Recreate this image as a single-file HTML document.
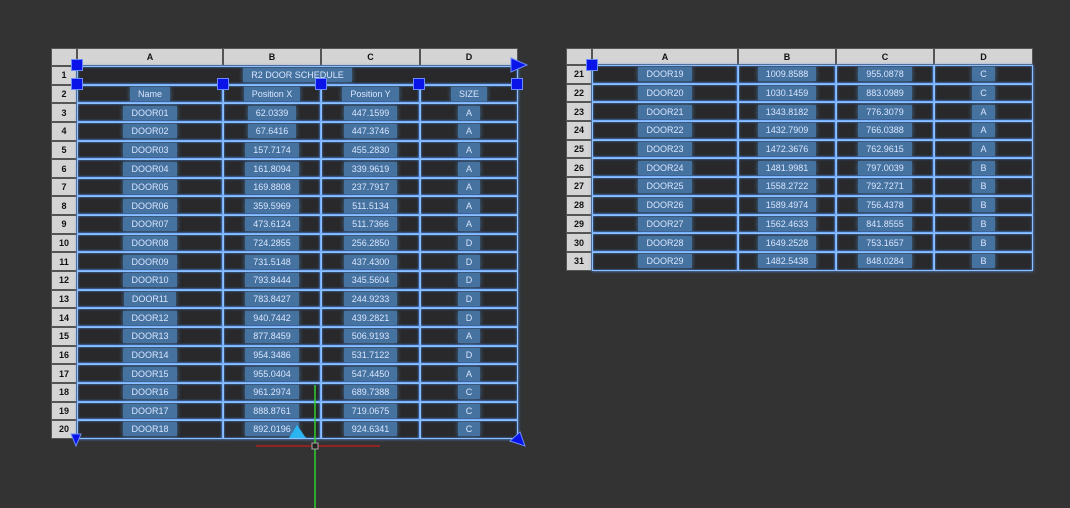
<!DOCTYPE html>
<html><head><meta charset="utf-8"><style>
body{margin:0;width:1070px;height:508px;background:#333333;position:relative;overflow:hidden;font-family:"Liberation Sans",sans-serif}
.g{position:absolute;display:grid;background:#2c2c2c}
.g>div{display:flex;align-items:center;justify-content:center;font-size:9px;box-sizing:border-box;overflow:hidden;white-space:nowrap}
.h{background:#d4d4d4;color:#111;font-weight:bold;border:1px solid #555;font-size:9px!important}
.c{background:#29292b;border:1px solid #8cc0ff;box-shadow:0 0 3px #5a9aff, inset 0 0 2px #4a86e0;color:#d8e6ff}
.c span{background:#46729f;padding:2px 8px;box-shadow:0 0 5px #46729f}
.L{left:51px;top:48px;width:467px;grid-template-columns:26px 146px 98px 99px 98px;grid-template-rows:18px repeat(20,18.65px)}
.R{left:566px;top:48px;width:467px;grid-template-columns:26px 146px 98px 98px 99px;grid-template-rows:17px repeat(11,18.7px)}
.sq{position:absolute;width:10px;height:10px;background:#0a14e8;border:1px solid #6a8cff}
</style></head><body>
<div class="g L">
<div class="h"></div><div class="h">A</div><div class="h">B</div><div class="h">C</div><div class="h">D</div>
<div class="h">1</div><div class="c" style="grid-column:2/6"><span>R2 DOOR SCHEDULE</span></div>
<div class="h">2</div><div class="c"><span>Name</span></div><div class="c"><span>Position X</span></div><div class="c"><span>Position Y</span></div><div class="c"><span>SIZE</span></div>
<div class="h">3</div><div class="c"><span>DOOR01</span></div><div class="c"><span>62.0339</span></div><div class="c"><span>447.1599</span></div><div class="c"><span>A</span></div>
<div class="h">4</div><div class="c"><span>DOOR02</span></div><div class="c"><span>67.6416</span></div><div class="c"><span>447.3746</span></div><div class="c"><span>A</span></div>
<div class="h">5</div><div class="c"><span>DOOR03</span></div><div class="c"><span>157.7174</span></div><div class="c"><span>455.2830</span></div><div class="c"><span>A</span></div>
<div class="h">6</div><div class="c"><span>DOOR04</span></div><div class="c"><span>161.8094</span></div><div class="c"><span>339.9619</span></div><div class="c"><span>A</span></div>
<div class="h">7</div><div class="c"><span>DOOR05</span></div><div class="c"><span>169.8808</span></div><div class="c"><span>237.7917</span></div><div class="c"><span>A</span></div>
<div class="h">8</div><div class="c"><span>DOOR06</span></div><div class="c"><span>359.5969</span></div><div class="c"><span>511.5134</span></div><div class="c"><span>A</span></div>
<div class="h">9</div><div class="c"><span>DOOR07</span></div><div class="c"><span>473.6124</span></div><div class="c"><span>511.7366</span></div><div class="c"><span>A</span></div>
<div class="h">10</div><div class="c"><span>DOOR08</span></div><div class="c"><span>724.2855</span></div><div class="c"><span>256.2850</span></div><div class="c"><span>D</span></div>
<div class="h">11</div><div class="c"><span>DOOR09</span></div><div class="c"><span>731.5148</span></div><div class="c"><span>437.4300</span></div><div class="c"><span>D</span></div>
<div class="h">12</div><div class="c"><span>DOOR10</span></div><div class="c"><span>793.8444</span></div><div class="c"><span>345.5604</span></div><div class="c"><span>D</span></div>
<div class="h">13</div><div class="c"><span>DOOR11</span></div><div class="c"><span>783.8427</span></div><div class="c"><span>244.9233</span></div><div class="c"><span>D</span></div>
<div class="h">14</div><div class="c"><span>DOOR12</span></div><div class="c"><span>940.7442</span></div><div class="c"><span>439.2821</span></div><div class="c"><span>D</span></div>
<div class="h">15</div><div class="c"><span>DOOR13</span></div><div class="c"><span>877.8459</span></div><div class="c"><span>506.9193</span></div><div class="c"><span>A</span></div>
<div class="h">16</div><div class="c"><span>DOOR14</span></div><div class="c"><span>954.3486</span></div><div class="c"><span>531.7122</span></div><div class="c"><span>D</span></div>
<div class="h">17</div><div class="c"><span>DOOR15</span></div><div class="c"><span>955.0404</span></div><div class="c"><span>547.4450</span></div><div class="c"><span>A</span></div>
<div class="h">18</div><div class="c"><span>DOOR16</span></div><div class="c"><span>961.2974</span></div><div class="c"><span>689.7388</span></div><div class="c"><span>C</span></div>
<div class="h">19</div><div class="c"><span>DOOR17</span></div><div class="c"><span>888.8761</span></div><div class="c"><span>719.0675</span></div><div class="c"><span>C</span></div>
<div class="h">20</div><div class="c"><span>DOOR18</span></div><div class="c"><span>892.0196</span></div><div class="c"><span>924.6341</span></div><div class="c"><span>C</span></div>
</div>
<div class="g R">
<div class="h"></div><div class="h">A</div><div class="h">B</div><div class="h">C</div><div class="h">D</div>
<div class="h">21</div><div class="c"><span>DOOR19</span></div><div class="c"><span>1009.8588</span></div><div class="c"><span>955.0878</span></div><div class="c"><span>C</span></div>
<div class="h">22</div><div class="c"><span>DOOR20</span></div><div class="c"><span>1030.1459</span></div><div class="c"><span>883.0989</span></div><div class="c"><span>C</span></div>
<div class="h">23</div><div class="c"><span>DOOR21</span></div><div class="c"><span>1343.8182</span></div><div class="c"><span>776.3079</span></div><div class="c"><span>A</span></div>
<div class="h">24</div><div class="c"><span>DOOR22</span></div><div class="c"><span>1432.7909</span></div><div class="c"><span>766.0388</span></div><div class="c"><span>A</span></div>
<div class="h">25</div><div class="c"><span>DOOR23</span></div><div class="c"><span>1472.3676</span></div><div class="c"><span>762.9615</span></div><div class="c"><span>A</span></div>
<div class="h">26</div><div class="c"><span>DOOR24</span></div><div class="c"><span>1481.9981</span></div><div class="c"><span>797.0039</span></div><div class="c"><span>B</span></div>
<div class="h">27</div><div class="c"><span>DOOR25</span></div><div class="c"><span>1558.2722</span></div><div class="c"><span>792.7271</span></div><div class="c"><span>B</span></div>
<div class="h">28</div><div class="c"><span>DOOR26</span></div><div class="c"><span>1589.4974</span></div><div class="c"><span>756.4378</span></div><div class="c"><span>B</span></div>
<div class="h">29</div><div class="c"><span>DOOR27</span></div><div class="c"><span>1562.4633</span></div><div class="c"><span>841.8555</span></div><div class="c"><span>B</span></div>
<div class="h">30</div><div class="c"><span>DOOR28</span></div><div class="c"><span>1649.2528</span></div><div class="c"><span>753.1657</span></div><div class="c"><span>B</span></div>
<div class="h">31</div><div class="c"><span>DOOR29</span></div><div class="c"><span>1482.5438</span></div><div class="c"><span>848.0284</span></div><div class="c"><span>B</span></div>
</div>
<div class="sq" style="left:71px;top:59px"></div>
<div class="sq" style="left:71px;top:78px"></div>
<div class="sq" style="left:217px;top:78px"></div>
<div class="sq" style="left:315px;top:78px"></div>
<div class="sq" style="left:413px;top:78px"></div>
<div class="sq" style="left:511px;top:78px"></div>
<div class="sq" style="left:586px;top:59px"></div>
<svg style="position:absolute;left:0;top:0" width="1070" height="508">
<polygon points="511,58 527,65 511,72" fill="#0a14e8" stroke="#6a8cff"/>
<polygon points="71,434 81,434 76,446" fill="#0a14e8" stroke="#6a8cff"/>
<polygon points="510,441 525,446 520,432" fill="#0a14e8" stroke="#6a8cff"/>
<polygon points="289,438 297,425 306,438" fill="#2ab4f0"/>
<line x1="256" y1="446" x2="380" y2="446" stroke="#b02020" stroke-width="1.5"/>
<line x1="315" y1="385" x2="315" y2="508" stroke="#30d030" stroke-width="1.5"/>
<rect x="312" y="443" width="6" height="6" fill="#222" stroke="#aaa" stroke-width="1"/>
</svg>
</body></html>
